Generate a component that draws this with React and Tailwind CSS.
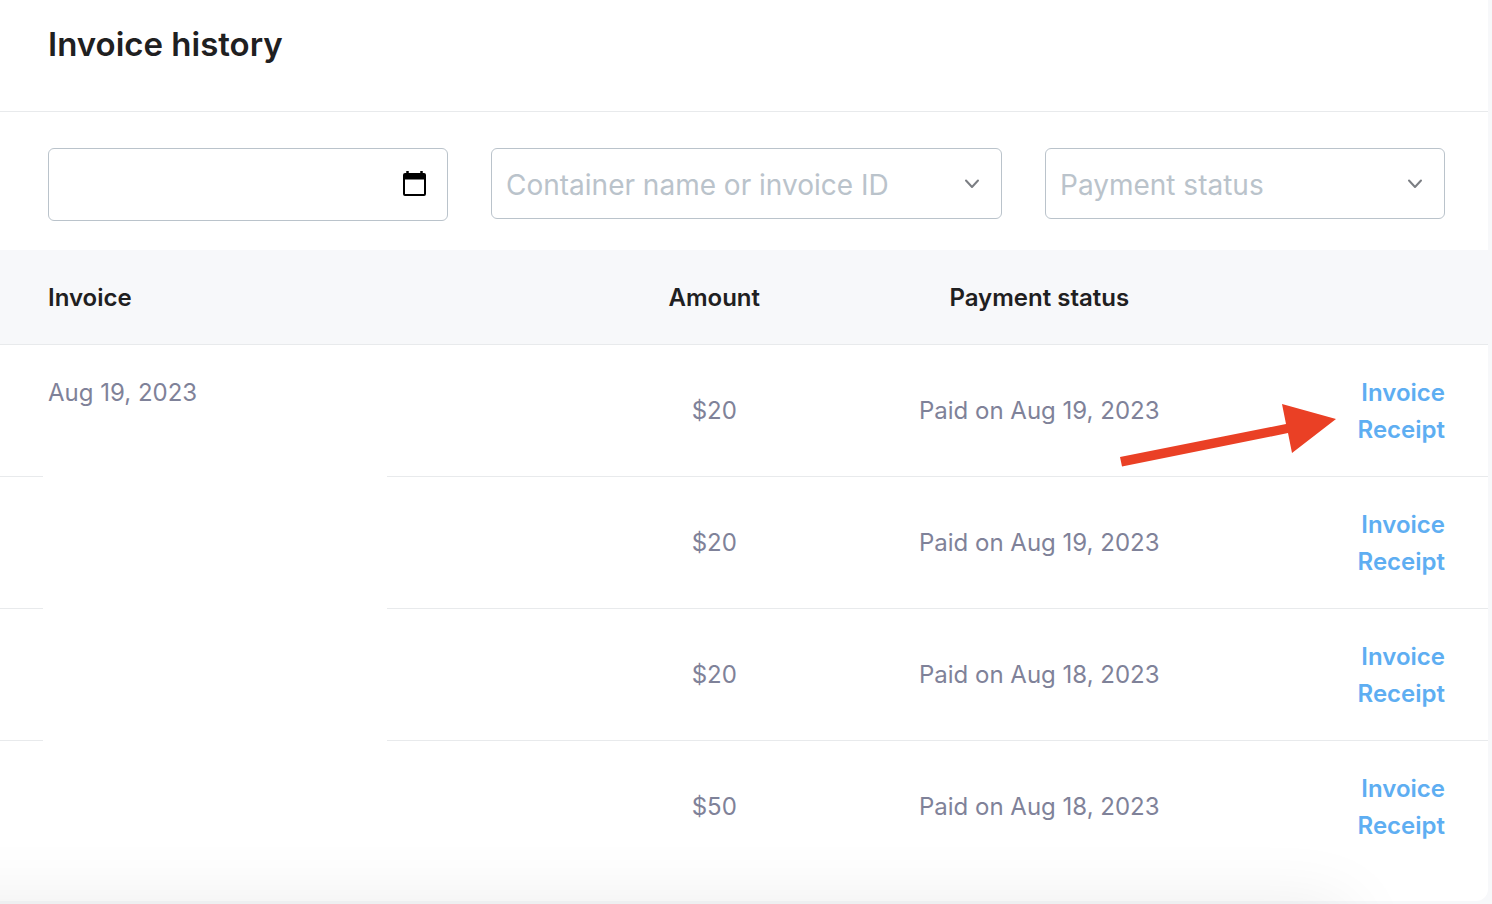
import React from 'react';

const INVOICES = [
  { id: 1, date: 'Aug 19, 2023', amount: '$20', status: 'Paid on Aug 19, 2023' },
  { id: 2, date: '', amount: '$20', status: 'Paid on Aug 19, 2023' },
  { id: 3, date: '', amount: '$20', status: 'Paid on Aug 18, 2023' },
  { id: 4, date: '', amount: '$50', status: 'Paid on Aug 18, 2023' }
];

function DateField() {
  return (
    <div className="relative">
      <input
        type="text"
        aria-label="Invoice date"
        className="block h-[73px] w-full rounded-md border border-[#bac3cb] bg-white pl-4 pr-14 text-[28px] text-[#1f2021] outline-none"
      />
      <button type="button" aria-label="Open calendar" className="absolute inset-y-0 right-[21px] flex items-center pb-[2px]">
        <svg width="25" height="26" viewBox="0 0 25 26" fill="none">
          <path d="M5.500 0v3M19.500 0v3" stroke="#000" strokeWidth="2.500" />
          <rect x="2" y="3" width="21" height="21" rx="1" stroke="#000" strokeWidth="2" />
          <path d="M1 4h23v4.500H1z" fill="#000" />
        </svg>
      </button>
    </div>
  );
}

function SelectField({ label }) {
  return (
    <div className="relative">
      <select
        aria-label={label}
        defaultValue=""
        className="block h-[71px] w-full appearance-none rounded-md border border-[#bac3cb] bg-white pl-[14px] pr-12 pt-[2px] text-[28px] text-[#bac3cb] outline-none"
      >
        <option value="">{label}</option>
      </select>
      <svg
        className="pointer-events-none absolute inset-y-0 right-[21px] my-auto"
        width="17"
        height="12"
        viewBox="0 0 17 12"
        fill="none"
        stroke="#7b7e83"
        strokeWidth="2"
        strokeLinecap="round"
        strokeLinejoin="round"
      >
        <path d="M2 2.500l6 6.500l6-6.500" />
      </svg>
    </div>
  );
}

function InvoiceRow({ invoice }) {
  return (
    <tr className="h-[132px] border-b border-[#e8eaec] last:border-b-0">
      <td className="pl-12 pt-[29px] text-left align-top">{invoice.date}</td>
      <td>{invoice.amount}</td>
      <td>{invoice.status}</td>
      <td className="pr-[43px] pt-[2px] text-right font-semibold text-[#5eaef2]">
        <a href="#invoice" className="block">Invoice</a>
        <a href="#receipt" className="block">Receipt</a>
      </td>
    </tr>
  );
}

function Arrow() {
  return (
    <svg
      className="pointer-events-none absolute right-[152px] top-[154px]"
      width="216"
      height="64"
      viewBox="0 0 216 64"
      fill="#ea4025"
    >
      <path d="M0 53L166 20L162 0L216 15L172 49L168 29L2 62.500Z" />
    </svg>
  );
}

export default function App() {
  return (
    <div className="relative min-h-screen overflow-hidden bg-[#f7f8fa] pr-1 pb-[3px] font-['Inter','Liberation_Sans',sans-serif]">
      <main className="rounded-br-xl bg-white pb-[29px]">
        <header className="border-b border-[#e8eaec] px-12 pb-[45px] pt-[23px]">
          <h1 className="text-[33px] leading-[43px] font-semibold text-[#1f2021]">Invoice history</h1>
        </header>

        <form className="grid grid-cols-[400fr_511fr_400fr] items-start gap-[43px] pb-[29px] pl-12 pr-[43px] pt-9">
          <DateField />
          <SelectField label="Container name or invoice ID" />
          <SelectField label="Payment status" />
        </form>

        <div className="relative">
          <table className="w-full table-fixed border-collapse text-center text-2xl leading-[37px] text-[#7f8299]">
            <thead className="bg-[#f7f8fa] text-[#1f2021]">
              <tr className="h-[94px] border-b border-[#e8eaec]">
                <th className="w-[40%] pl-12 pt-[2px] text-left font-semibold">Invoice</th>
                <th className="w-[16%] pt-[2px] font-semibold">Amount</th>
                <th className="w-[412px] pt-[2px] font-semibold">Payment status</th>
                <th aria-label="Documents" />
              </tr>
            </thead>
            <tbody>
              {INVOICES.map((invoice) => (
                <InvoiceRow key={invoice.id} invoice={invoice} />
              ))}
            </tbody>
          </table>
          <div className="absolute bottom-0 left-[43px] top-44 w-[344px] bg-white" />
          <Arrow />
        </div>
      </main>
      {/* soft shadow of the bar docked under the page */}
      <div className="pointer-events-none absolute -left-24 right-36 top-full h-24 shadow-[0_0_70px_rgba(0,0,0,0.08)]" />
    </div>
  );
}
